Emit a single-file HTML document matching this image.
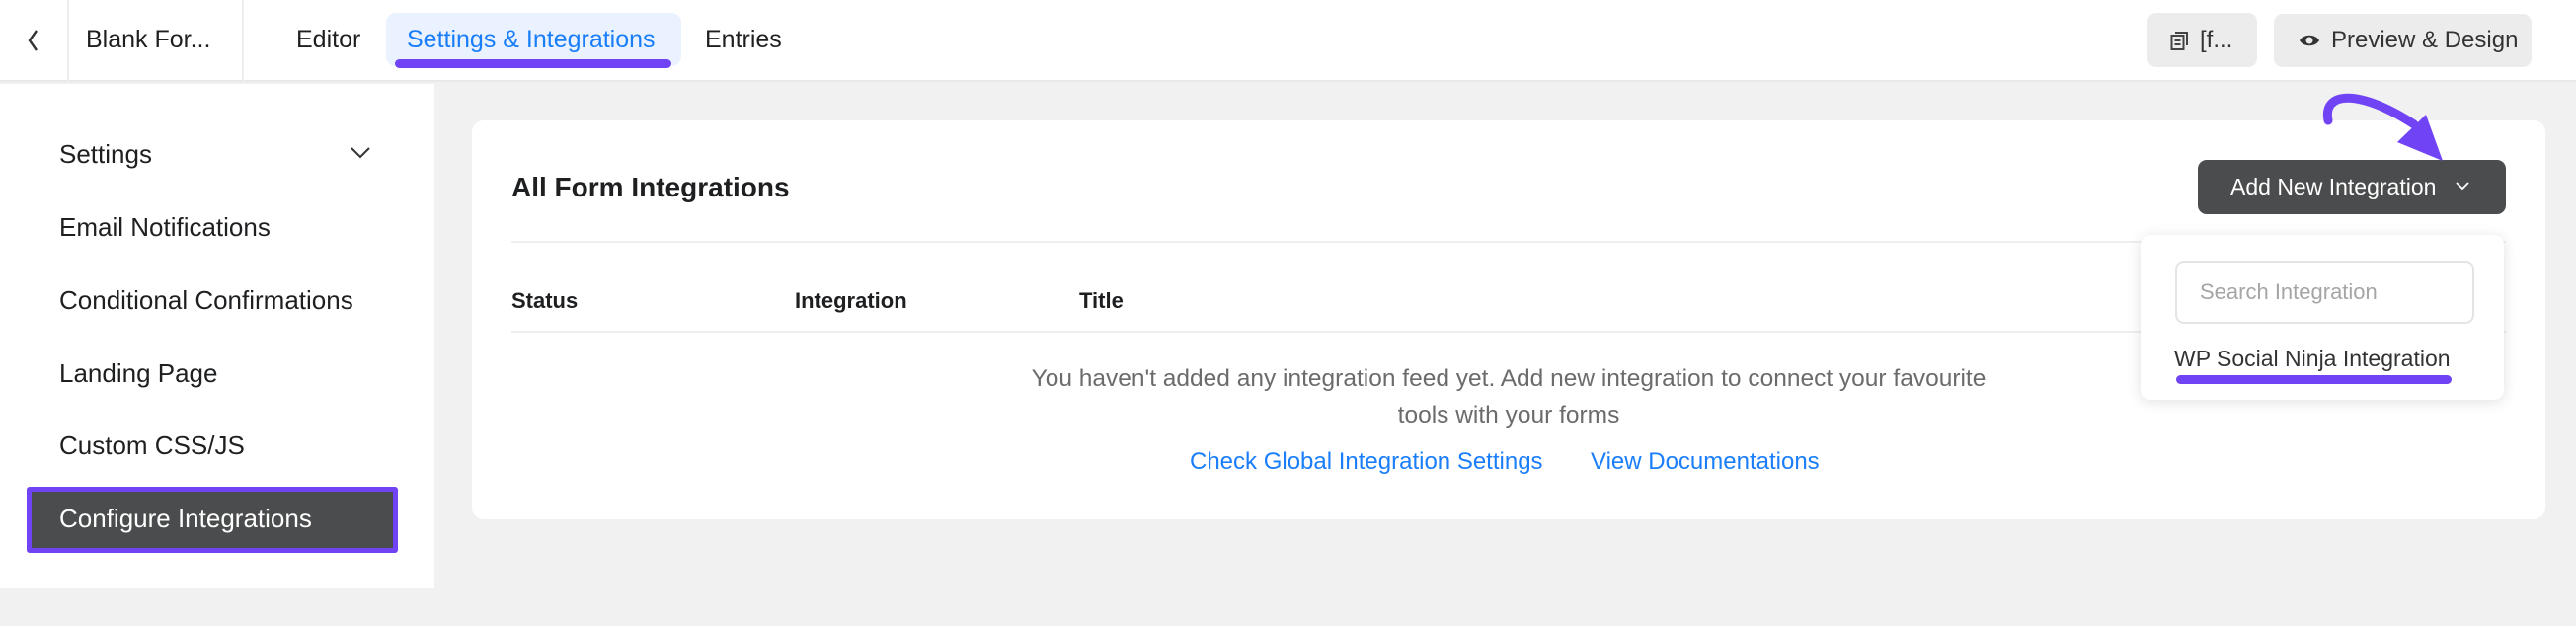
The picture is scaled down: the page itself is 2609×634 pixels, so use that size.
<!DOCTYPE html>
<html><head><meta charset="utf-8"><style>
*{box-sizing:border-box;margin:0;padding:0}
body{width:2609px;height:634px;background:#f1f1f1;font-family:"Liberation Sans",sans-serif;color:#1e1f21;position:relative;overflow:hidden}
.a{position:absolute;white-space:nowrap}
</style></head><body>
<div class="a" style="left:0;top:0;width:2609px;height:83px;background:#fff;border-bottom:2px solid #e8e8e8"></div>
<svg class="a" style="left:26px;top:28px" width="16" height="26" viewBox="0 0 16 26"><path d="M11 3 L4 13 L11 23" stroke="#333" stroke-width="2.4" fill="none"/></svg>
<div class="a" style="left:68px;top:0;width:2px;height:83px;background:#eee"></div>
<div class="a" style="left:245px;top:0;width:2px;height:83px;background:#eee"></div>
<div class="a" style="left:87px;top:26px;font-size:25px">Blank For...</div>
<div class="a" style="left:300px;top:26px;font-size:25px">Editor</div>
<div class="a" style="left:391px;top:13px;width:299px;height:54px;background:#e9f2fe;border-radius:10px"></div>
<div class="a" style="left:412px;top:26px;font-size:25px;color:#1a7efb">Settings &amp; Integrations</div>
<div class="a" style="left:400px;top:60px;width:280px;height:9px;background:#7043f5;border-radius:5px"></div>
<div class="a" style="left:714px;top:26px;font-size:25px">Entries</div>
<div class="a" style="left:2175px;top:13px;width:111px;height:55px;background:#ececec;border-radius:9px"></div>
<svg class="a" style="left:2198px;top:31px" width="20" height="21" viewBox="0 0 20 21"><rect x="1.5" y="5" width="12" height="14" fill="none" stroke="#444" stroke-width="2"/><path d="M5 2h12v13" fill="none" stroke="#444" stroke-width="2"/><path d="M4.5 10h6M4.5 14h6" stroke="#444" stroke-width="2"/></svg>
<div class="a" style="left:2228px;top:27px;font-size:24px;color:#333">[f...</div>
<div class="a" style="left:2303px;top:14px;width:261px;height:54px;background:#ececec;border-radius:9px"></div>
<svg class="a" style="left:2328px;top:32px" width="22" height="18" viewBox="0 0 22 18"><path d="M1 9 C5 2,17 2,21 9 C17 16,5 16,1 9Z" fill="#333"/><circle cx="11" cy="9" r="3.5" fill="#ececec"/></svg>
<div class="a" style="left:2361px;top:27px;font-size:24px;color:#333">Preview &amp; Design</div>

<div class="a" style="left:0;top:85px;width:440px;height:511px;background:#fff"></div>
<div class="a" style="left:60px;top:141px;font-size:26px">Settings</div>
<svg class="a" style="left:354px;top:148px" width="22" height="14" viewBox="0 0 22 14"><path d="M2 2 L11 11 L20 2" stroke="#333" stroke-width="2" fill="none"/></svg>
<div class="a" style="left:60px;top:215px;font-size:26px">Email Notifications</div>
<div class="a" style="left:60px;top:289px;font-size:26px">Conditional Confirmations</div>
<div class="a" style="left:60px;top:363px;font-size:26px">Landing Page</div>
<div class="a" style="left:60px;top:436px;font-size:26px">Custom CSS/JS</div>
<div class="a" style="left:27px;top:493px;width:376px;height:67px;background:#4b4c4d;border:5px solid #7043f5;border-radius:3px"></div>
<div class="a" style="left:60px;top:510px;font-size:26px;color:#fff">Configure Integrations</div>

<div class="a" style="left:478px;top:122px;width:2100px;height:404px;background:#fff;border-radius:12px"></div>
<div class="a" style="left:518px;top:174px;font-size:28px;font-weight:bold">All Form Integrations</div>
<div class="a" style="left:518px;top:244px;width:2020px;height:2px;background:#efefef"></div>
<div class="a" style="left:518px;top:292px;font-size:22px;font-weight:bold">Status</div>
<div class="a" style="left:805px;top:292px;font-size:22px;font-weight:bold">Integration</div>
<div class="a" style="left:1093px;top:292px;font-size:22px;font-weight:bold">Title</div>
<div class="a" style="left:518px;top:335px;width:2020px;height:2px;background:#efefef"></div>
<div class="a" style="left:900px;top:365px;width:1256px;text-align:center;font-size:24.5px;line-height:37px;color:#6b6b6b;white-space:normal">You haven't added any integration feed yet. Add new integration to connect your favourite<br>tools with your forms</div>
<div class="a" style="left:1205px;top:454px;font-size:24px;color:#1a7efb">Check Global Integration Settings</div>
<div class="a" style="left:1611px;top:454px;font-size:24px;color:#1a7efb">View Documentations</div>

<div class="a" style="left:2226px;top:162px;width:312px;height:55px;background:#4b4c4d;border-radius:9px"></div>
<div class="a" style="left:2259px;top:176px;font-size:23px;color:#fff">Add New Integration</div>
<svg class="a" style="left:2486px;top:183px" width="16" height="11" viewBox="0 0 16 11"><path d="M2 2 L8 8 L14 2" stroke="#fff" stroke-width="1.8" fill="none"/></svg>

<div class="a" style="left:2168px;top:238px;width:368px;height:167px;background:#fff;border-radius:10px;box-shadow:0 2px 14px rgba(0,0,0,.12)"></div>
<div class="a" style="left:2203px;top:264px;width:303px;height:64px;border:2px solid #e4e4e4;border-radius:9px"></div>
<div class="a" style="left:2228px;top:283px;font-size:22px;color:#a5a5a5">Search Integration</div>
<div class="a" style="left:2202px;top:350px;font-size:23px;color:#333">WP Social Ninja Integration</div>
<div class="a" style="left:2204px;top:380px;width:279px;height:9px;background:#7043f5;border-radius:5px"></div>

<svg class="a" style="left:0;top:0" width="2609" height="634"><path d="M2358 122 C2352 92,2390 90,2445 126" stroke="#7043f5" stroke-width="9" stroke-linecap="round" fill="none"/><polygon points="2428,144 2457,116 2474,163" fill="#7043f5"/></svg>
</body></html>
